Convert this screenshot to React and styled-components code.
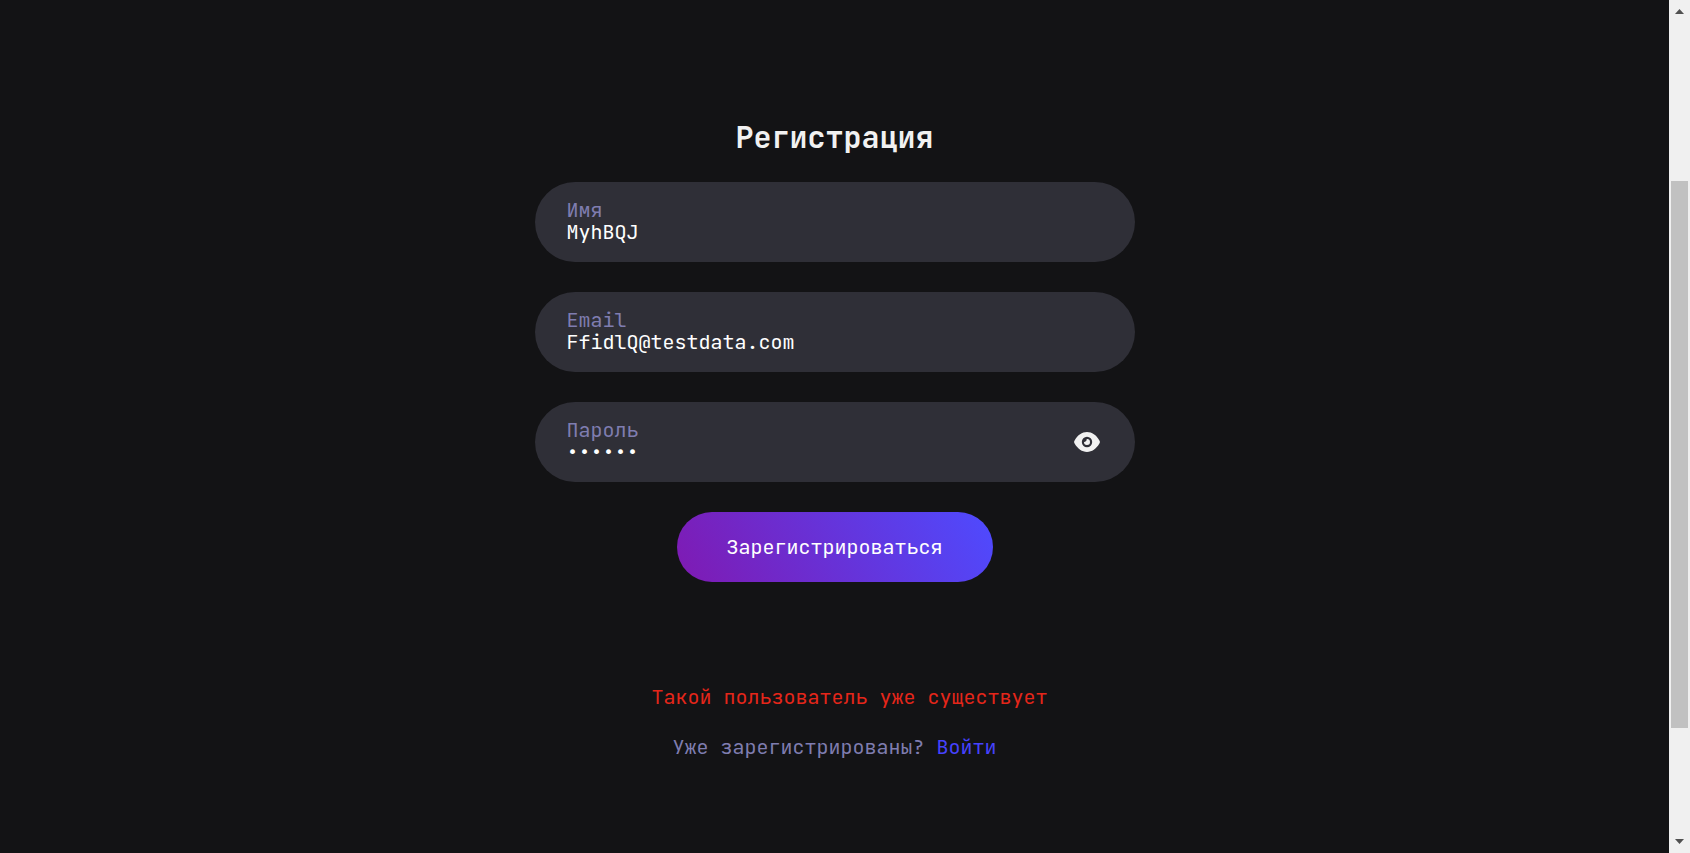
import React, { useState } from "react";
import styled, { createGlobalStyle } from "styled-components";

const GlobalStyle = createGlobalStyle`
  *, *::before, *::after { box-sizing: border-box; }
  html, body, #root { height: 100%; }
  body {
    margin: 0;
    background: #131315;
    color: #f1f1f1;
    font-family: "JetBrains Mono", "DejaVu Sans Mono", monospace;
    font-size: 20px;
    line-height: 22px;
  }
`;

const Page = styled.div`
  display: flex;
  min-height: 100%;
`;

const Content = styled.main`
  flex: 1;
  display: flex;
  flex-direction: column;
  align-items: center;
  padding: 117px 20px 40px;
`;

const Title = styled.h1`
  margin: 0 0 25px;
  font-size: 30px;
  line-height: 40px;
  font-weight: 700;
`;

const Form = styled.form`
  width: 100%;
  max-width: 600px;
  display: flex;
  flex-direction: column;
  align-items: center;
  gap: 30px;
`;

const Field = styled.div`
  width: 100%;
  height: 80px;
  display: flex;
  align-items: center;
  padding: 0 35px 0 32px;
  border-radius: 40px;
  background: #2f2f37;
`;

const FieldText = styled.div`
  flex: 1;
  display: flex;
  flex-direction: column;
  padding-bottom: 2px;
`;

const Label = styled.label`
  color: #7f7db0;
`;

const Input = styled.input`
  width: 100%;
  height: 22px;
  padding: 0;
  border: 0;
  outline: 0;
  background: transparent;
  color: #ffffff;
  font: inherit;
`;

const IconButton = styled.button`
  display: flex;
  padding: 0;
  border: 0;
  background: transparent;
  color: #f1f1f1;
  cursor: pointer;
`;

const SubmitButton = styled.button`
  height: 70px;
  padding: 0 50px;
  border: 0;
  border-radius: 35px;
  background: linear-gradient(60deg, #7f1ab2 0%, #4e4bff 100%);
  color: #ffffff;
  font: inherit;
  cursor: pointer;
`;

const ErrorMessage = styled.p`
  margin: 104px 0 28px;
  padding-left: 30px;
  color: #e5261a;
`;

const Prompt = styled.p`
  margin: 0;
  color: #7f7db0;
`;

const Link = styled.a`
  color: #4642ff;
  text-decoration: none;
`;

const ScrollTrack = styled.div`
  width: 21px;
  display: flex;
  flex-direction: column;
  align-items: center;
  justify-content: space-between;
  padding: 9px 0;
  background: #f0f0f0;
`;

const ScrollSpace = styled.div`
  flex: ${(p) => p.$grow} 0 0;
`;

const ScrollThumb = styled.div`
  width: 17px;
  flex: 547 0 0;
  background: #c1c1c1;
`;

const Arrow = styled.svg`
  display: block;
  flex: none;
`;

function EyeIcon() {
  return (
    <svg width="26" height="20" viewBox="0 0 26 20" aria-hidden="true">
      <path
        d="M13 0C8 0 3.800 3 .6 8.400a3 3 0 0 0 0 3.200C3.800 17 8 20 13 20s9.200-3 12.400-8.400a3 3 0 0 0 0-3.200C22.200 3 18 0 13 0Z"
        fill="currentColor"
      />
      <circle cx="13" cy="10" r="5.200" fill="#2f2f37" />
      <path d="M12.600 7a3 3 0 1 1-2.600 2.800 1.400 1.400 0 0 0 1.800-.7A1.600 1.600 0 0 0 12.600 7Z" fill="currentColor" />
    </svg>
  );
}

function TextField({ id, label, type, defaultValue, children }) {
  return (
    <Field>
      <FieldText>
        <Label htmlFor={id}>{label}</Label>
        <Input id={id} type={type} defaultValue={defaultValue} spellCheck={false} />
      </FieldText>
      {children}
    </Field>
  );
}

export default function App() {
  const [visible, setVisible] = useState(false);
  return (
    <>
      <GlobalStyle />
      <Page>
        <Content>
          <Title>Регистрация</Title>
          <Form onSubmit={(e) => e.preventDefault()}>
            <TextField id="name" label="Имя" type="text" defaultValue="MyhBQJ" />
            <TextField id="email" label="Email" type="email" defaultValue="FfidlQ@testdata.com" />
            <TextField
              id="password"
              label="Пароль"
              type={visible ? "text" : "password"}
              defaultValue="secret"
            >
              <IconButton
                type="button"
                aria-label="Показать пароль"
                onClick={() => setVisible(!visible)}
              >
                <EyeIcon />
              </IconButton>
            </TextField>
            <SubmitButton type="submit">Зарегистрироваться</SubmitButton>
          </Form>
          <ErrorMessage role="alert">Такой пользователь уже существует</ErrorMessage>
          <Prompt>
            Уже зарегистрированы? <Link href="#login">Войти</Link>
          </Prompt>
        </Content>
        <ScrollTrack aria-hidden="true">
          <Arrow width="9" height="5" viewBox="0 0 9 5">
            <path d="M0 5 4.500 0 9 5Z" fill="#505050" />
          </Arrow>
          <ScrollSpace $grow={167} />
          <ScrollThumb />
          <ScrollSpace $grow={111} />
          <Arrow width="9" height="5" viewBox="0 0 9 5">
            <path d="M0 0 4.500 5 9 0Z" fill="#505050" />
          </Arrow>
        </ScrollTrack>
      </Page>
    </>
  );
}
